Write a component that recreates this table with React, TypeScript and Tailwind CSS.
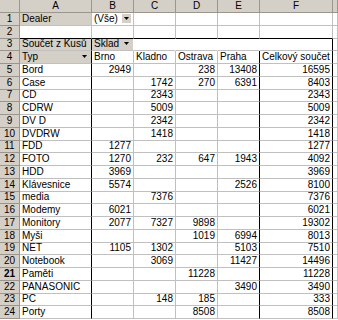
import type { ReactNode } from "react";

type Row = [string, string, string, string, string, string];

// Typ | Brno | Kladno | Ostrava | Praha | Celkový součet
const rows: Row[] = [
  ["Bord", "2949", "", "238", "13408", "16595"],
  ["Case", "", "1742", "270", "6391", "8403"],
  ["CD", "", "2343", "", "", "2343"],
  ["CDRW", "", "5009", "", "", "5009"],
  ["DV D", "", "2342", "", "", "2342"],
  ["DVDRW", "", "1418", "", "", "1418"],
  ["FDD", "1277", "", "", "", "1277"],
  ["FOTO", "1270", "232", "647", "1943", "4092"],
  ["HDD", "3969", "", "", "", "3969"],
  ["Klávesnice", "5574", "", "", "2526", "8100"],
  ["media", "", "7376", "", "", "7376"],
  ["Modemy", "6021", "", "", "", "6021"],
  ["Monitory", "2077", "7327", "9898", "", "19302"],
  ["Myši", "", "", "1019", "6994", "8013"],
  ["NET", "1105", "1302", "", "5103", "7510"],
  ["Notebook", "", "3069", "", "11427", "14496"],
  ["Paměti", "", "", "11228", "", "11228"],
  ["PANASONIC", "", "", "", "3490", "3490"],
  ["PC", "", "148", "185", "", "333"],
  ["Porty", "", "", "8508", "", "8508"],
];

function Arrow() {
  return (
    <span className="ml-auto mb-[1px] flex h-[9px] w-[9px] shrink-0 items-center justify-center bg-[#d4d0c8]">
      <svg width="5" height="3" viewBox="0 0 5 3">
        <path d="M0 0H5L2.5 3Z" fill="#000" />
      </svg>
    </span>
  );
}

function Head({ children, bold }: { children?: ReactNode; bold?: boolean }) {
  return (
    <div
      className={
        "flex items-center justify-center border-r border-b border-r-[#9a968e] border-b-[#9a968e] bg-[#d4d0c8] leading-none text-black " +
        (bold ? "font-bold" : "")
      }
    >
      {children}
    </div>
  );
}

function Cell({
  children,
  right,
  gray,
  rb = "grid",
  bb = "grid",
}: {
  children?: ReactNode;
  right?: boolean;
  gray?: boolean;
  rb?: "grid" | "black" | "none";
  bb?: "grid" | "black";
}) {
  const rClass = rb === "black" ? "border-r-black" : rb === "none" ? "border-r-white" : "border-r-[#c0c0c0]";
  const bClass = bb === "black" ? "border-b-black" : "border-b-[#c0c0c0]";
  return (
    <div
      className={`flex items-end overflow-hidden whitespace-nowrap border-r border-b px-[2px] pb-[1px] leading-[10px] ${rClass} ${bClass} ${
        gray ? "bg-[#d4d0c8]" : "bg-white"
      } ${right ? "justify-end" : "justify-start"}`}
    >
      {children}
    </div>
  );
}

export default function App() {
  return (
    <div className="h-[320px] w-[338px] overflow-hidden bg-white font-['Liberation_Sans',Arial,sans-serif] text-[10px] text-black">
      <div className="grid grid-cols-[20px_72px_42px_42px_42px_42px_73px_1fr] grid-rows-[13px_repeat(24,12.75px)]">
        {/* column headers */}
        <Head />
        {["A", "B", "C", "D", "E", "F", ""].map((c, i) => (
          <Head key={i}>{c}</Head>
        ))}

        {/* 1 */}
        <Head>1</Head>
        <Cell gray>Dealer</Cell>
        <Cell>
          (Vše)
          <Arrow />
        </Cell>
        <Cell />
        <Cell />
        <Cell />
        <Cell />
        <Cell />

        {/* 2 */}
        <Head>2</Head>
        <Cell bb="black" />
        <Cell bb="black" />
        <Cell bb="black" />
        <Cell bb="black" />
        <Cell bb="black" />
        <Cell bb="black" />
        <Cell />

        {/* 3 */}
        <Head>3</Head>
        <Cell gray rb="black">Součet z Kusů</Cell>
        <Cell gray rb="none">
          Sklad
          <Arrow />
        </Cell>
        <Cell rb="none" />
        <Cell rb="none" />
        <Cell rb="none" />
        <Cell rb="black" />
        <Cell />

        {/* 4 */}
        <Head>4</Head>
        <Cell gray rb="black">
          Typ
          <Arrow />
        </Cell>
        <Cell>Brno</Cell>
        <Cell>Kladno</Cell>
        <Cell>Ostrava</Cell>
        <Cell rb="black">Praha</Cell>
        <Cell rb="black">Celkový součet</Cell>
        <Cell />

        {rows.map((r, i) => {
          const n = i + 5;
          return [
            <Head key={`h${n}`} bold={n === 21}>
              {n}
            </Head>,
            <Cell key={`a${n}`} rb="black">
              {r[0]}
            </Cell>,
            <Cell key={`b${n}`} right>
              {r[1]}
            </Cell>,
            <Cell key={`c${n}`} right>
              {r[2]}
            </Cell>,
            <Cell key={`d${n}`} right>
              {r[3]}
            </Cell>,
            <Cell key={`e${n}`} right rb="black">
              {r[4]}
            </Cell>,
            <Cell key={`f${n}`} right rb="black">
              {r[5]}
            </Cell>,
            <Cell key={`g${n}`} />,
          ];
        })}
      </div>
    </div>
  );
}
